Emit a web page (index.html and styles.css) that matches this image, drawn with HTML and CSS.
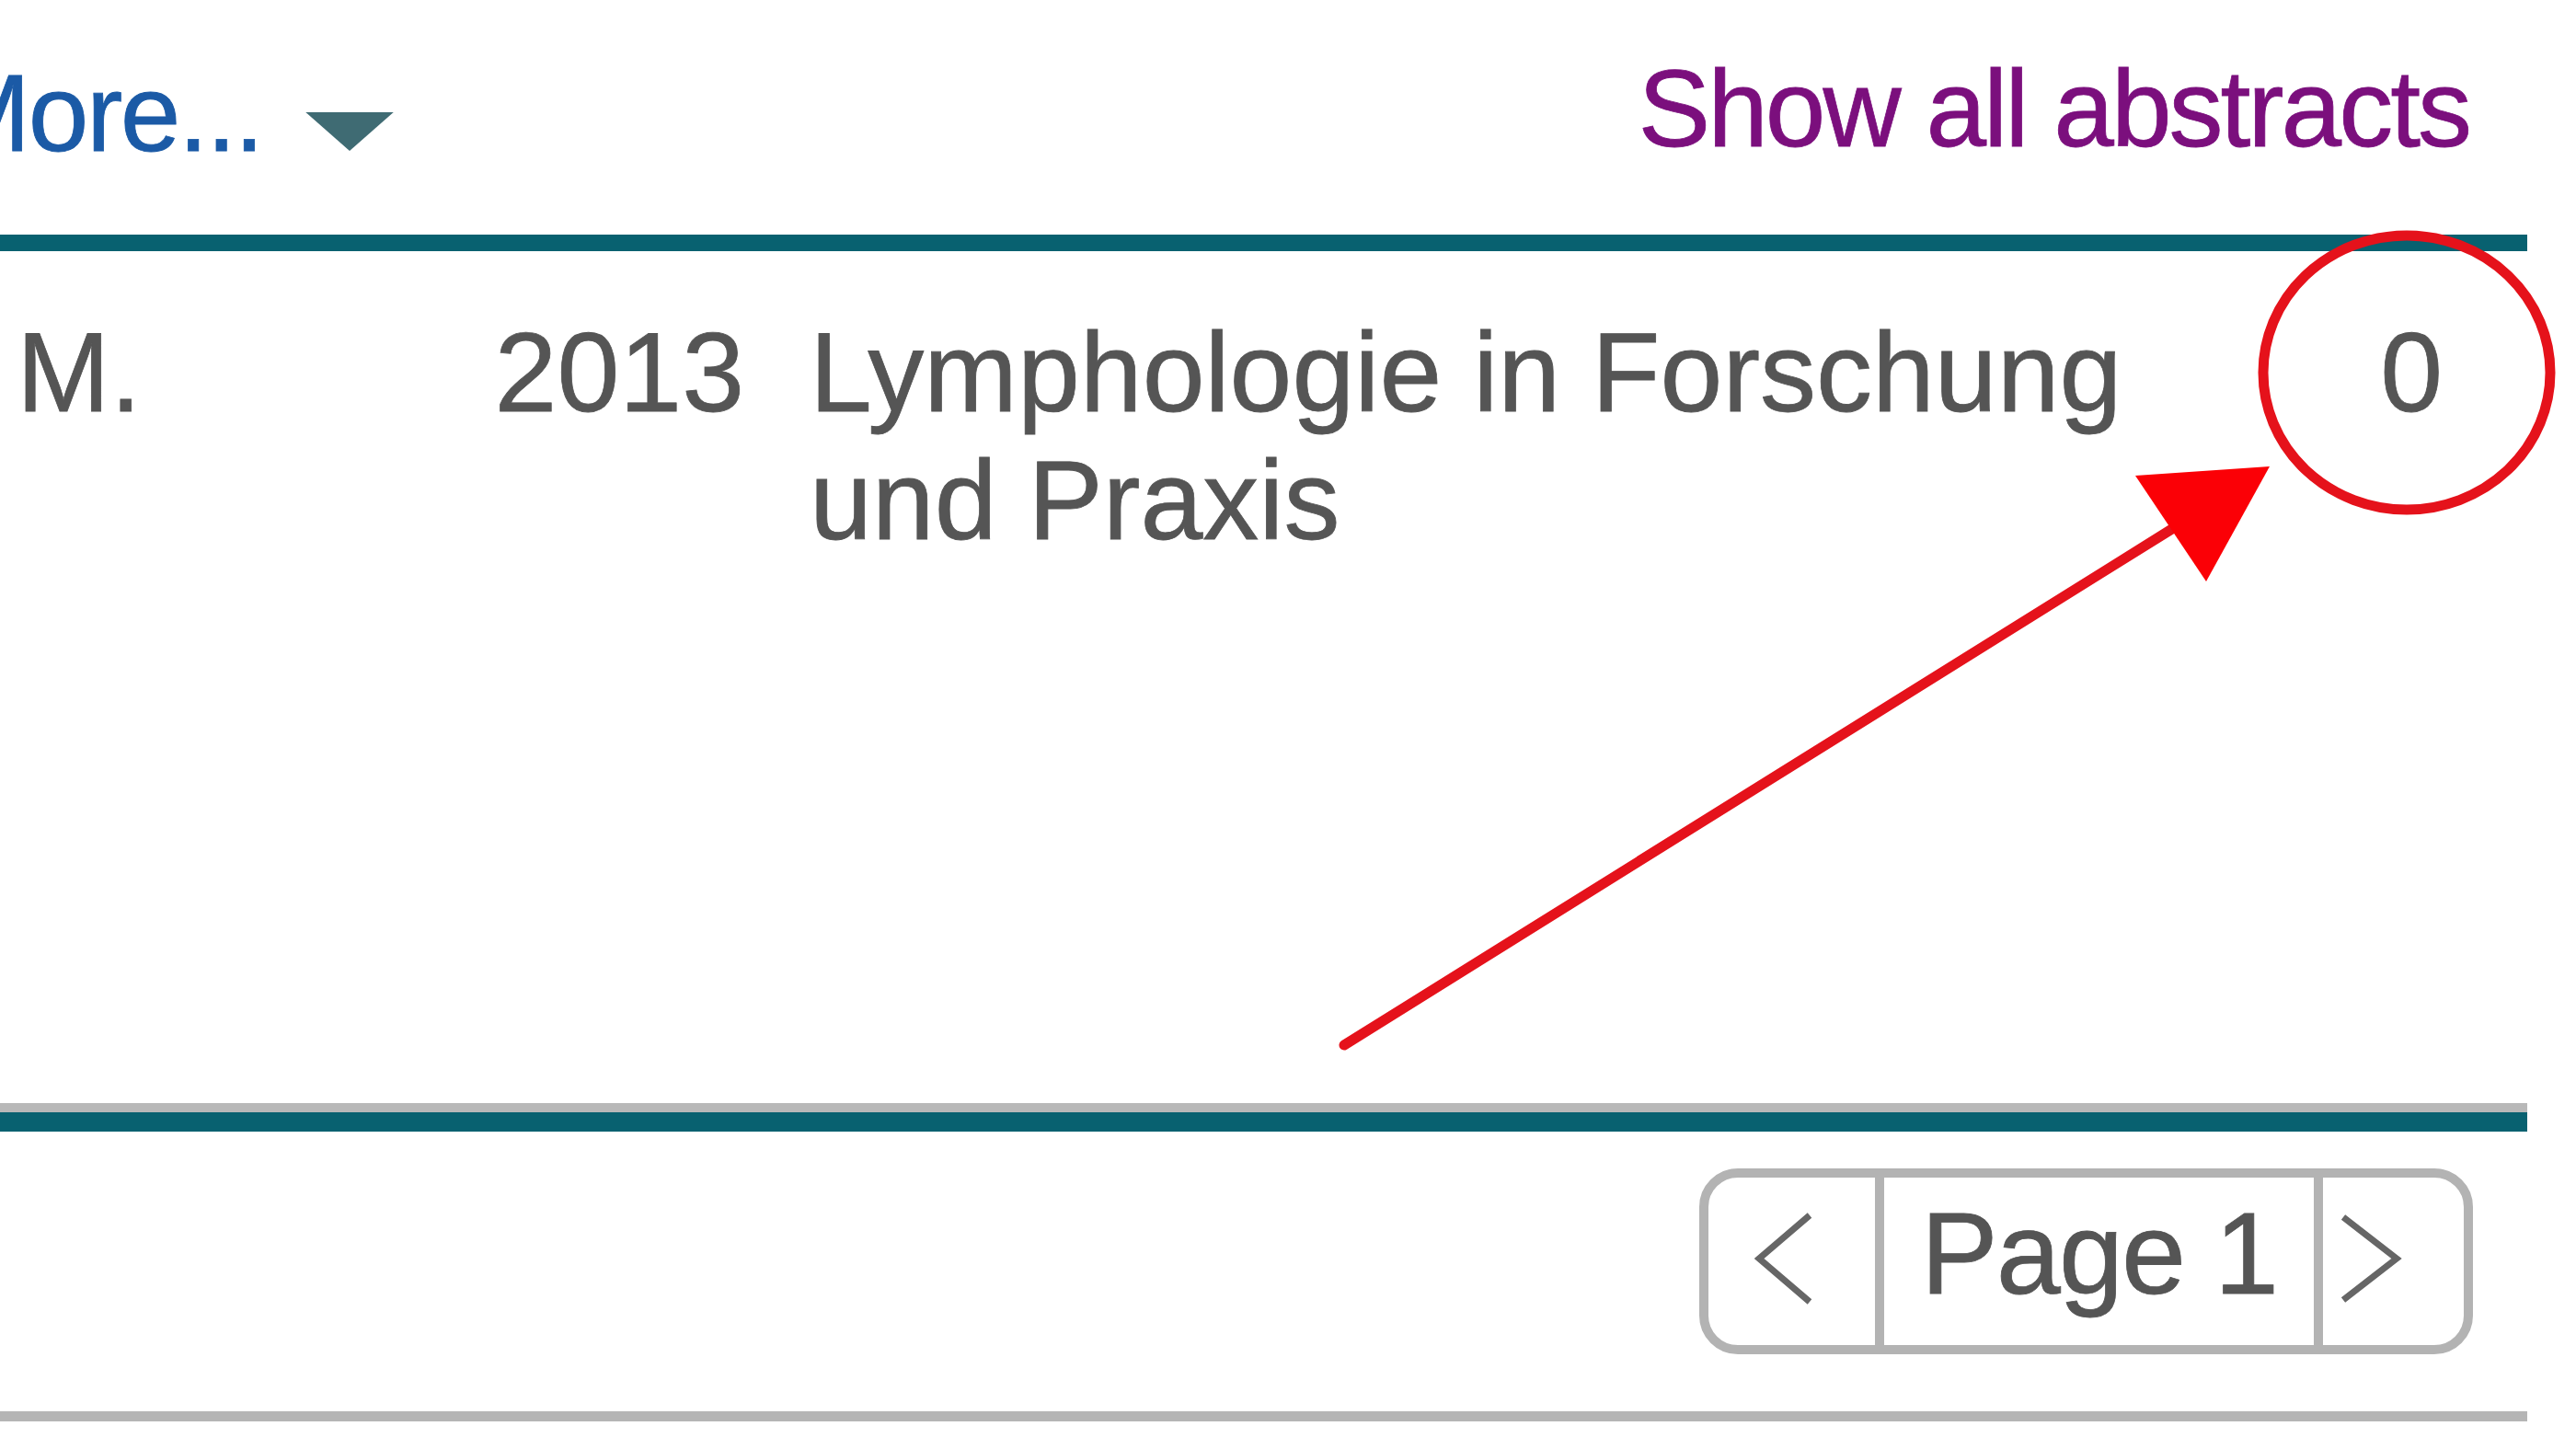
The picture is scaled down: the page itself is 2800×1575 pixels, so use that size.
FILE: index.html
```html
<!DOCTYPE html>
<html lang="de">
<head>
    <meta charset="UTF-8">
    <title>Suchergebnisse</title>
    <link rel="stylesheet" href="styles.css">
</head>
<body>
    <div class="results">
        <div class="toolbar">
            <a class="more" href="#">More...<svg class="caret" viewBox="0 0 100 44"><polygon points="0,0 100,0 50,44"/></svg></a>
            <a class="show-all" href="#">Show all abstracts</a>
        </div>

        <div class="hits">
            <div class="hit">
                <div class="author">M.</div>
                <div class="year">2013</div>
                <div class="journal">Lymphologie in Forschung und Praxis</div>
                <div class="cites">0</div>
            </div>
        </div>

        <div class="pager-bar">
            <div class="pager">
                <a class="prev" href="#"><svg viewBox="0 0 64 100"><polyline points="60,3 5,50 60,97"/></svg></a>
                <span class="page">Page 1</span>
                <a class="next" href="#"><svg viewBox="0 0 68 96"><polyline points="4,3 62,48 4,93"/></svg></a>
            </div>
        </div>
    </div>

    <!-- Anmerkung: Kreis und Pfeil auf die Zitationen -->
    <svg class="markup" viewBox="0 0 2800 1575">
        <ellipse cx="2616" cy="405" rx="156" ry="149"/>
        <line x1="1461" y1="1136" x2="2372" y2="568"/>
        <polygon points="2321,517 2467,507 2398,632"/>
    </svg>
</body>
</html>
```

FILE: styles.css
```css
* { margin: 0; padding: 0; box-sizing: border-box; }

body {
    font-family: "Liberation Sans", Arial, sans-serif;
    background: #fff;
    width: 2800px;
    height: 1575px;
    overflow: hidden;
    position: relative;
    -webkit-text-stroke: 0.8px currentColor;
}

.results {
    width: 2747px;
}

/* Kopfzeile mit Links */
.toolbar {
    display: flex;
    justify-content: space-between;
    align-items: flex-start;
    height: 255px;
    padding: 64px 63px 0 0;
    font-size: 118px;
    line-height: 1;
}

.more {
    display: flex;
    align-items: flex-start;
    margin-left: -65px;
    color: #1b5aa6;
    text-decoration: none;
    letter-spacing: -2.5px;
}

.caret {
    width: 98px;
    height: 42px;
    margin: 58px 0 0 46px;
    fill: #3f6b73;
}

.show-all {
    margin-top: -5px;
    color: #7b0f7d;
    text-decoration: none;
    letter-spacing: -3px;
}

/* Trefferliste */
.hits {
    border-bottom: 21px solid #086170;
}

.hit {
    display: grid;
    grid-template-columns: 400px 391px 1591px 1fr;
    height: 954px;
    padding: 63px 0 0 18px;
    border-top: 18px solid #086170;
    border-bottom: 10px solid #b8b8b8;
    font-size: 122px;
    line-height: 139px;
    color: #555;
}

.year { text-align: right; }
.journal { padding-left: 71px; }
.cites { text-align: right; padding-right: 92px; }

/* Blättern */
.pager-bar {
    display: flex;
    justify-content: flex-end;
    height: 315px;
    padding: 40px 59px 0 0;
    border-bottom: 11px solid #b5b5b5;
}

.pager {
    display: flex;
    height: 202px;
    border: 10px solid #b3b3b3;
    border-radius: 42px;
    overflow: hidden;
    color: #555;
}

.pager a { display: block; }

.pager svg {
    fill: none;
    stroke: #666;
    stroke-width: 7;
}

.prev {
    width: 191px;
    padding: 38px 0 0 50px;
    border-right: 10px solid #b3b3b3;
}

.prev svg { width: 64px; height: 100px; }

.page {
    width: 477px;
    border-right: 10px solid #b3b3b3;
    font-size: 126px;
    line-height: 166px;
    letter-spacing: -2px;
    text-align: center;
}

.next {
    width: 153px;
    padding: 40px 0 0 18px;
}

.next svg { width: 68px; height: 96px; }

/* Markierung */
.markup {
    position: absolute;
    top: 0;
    left: 0;
    width: 2800px;
    height: 1575px;
    pointer-events: none;
}

.markup ellipse,
.markup line {
    fill: none;
    stroke: #e5121b;
    stroke-width: 11;
    stroke-linecap: round;
}

.markup polygon { fill: #fb0006; }
```
